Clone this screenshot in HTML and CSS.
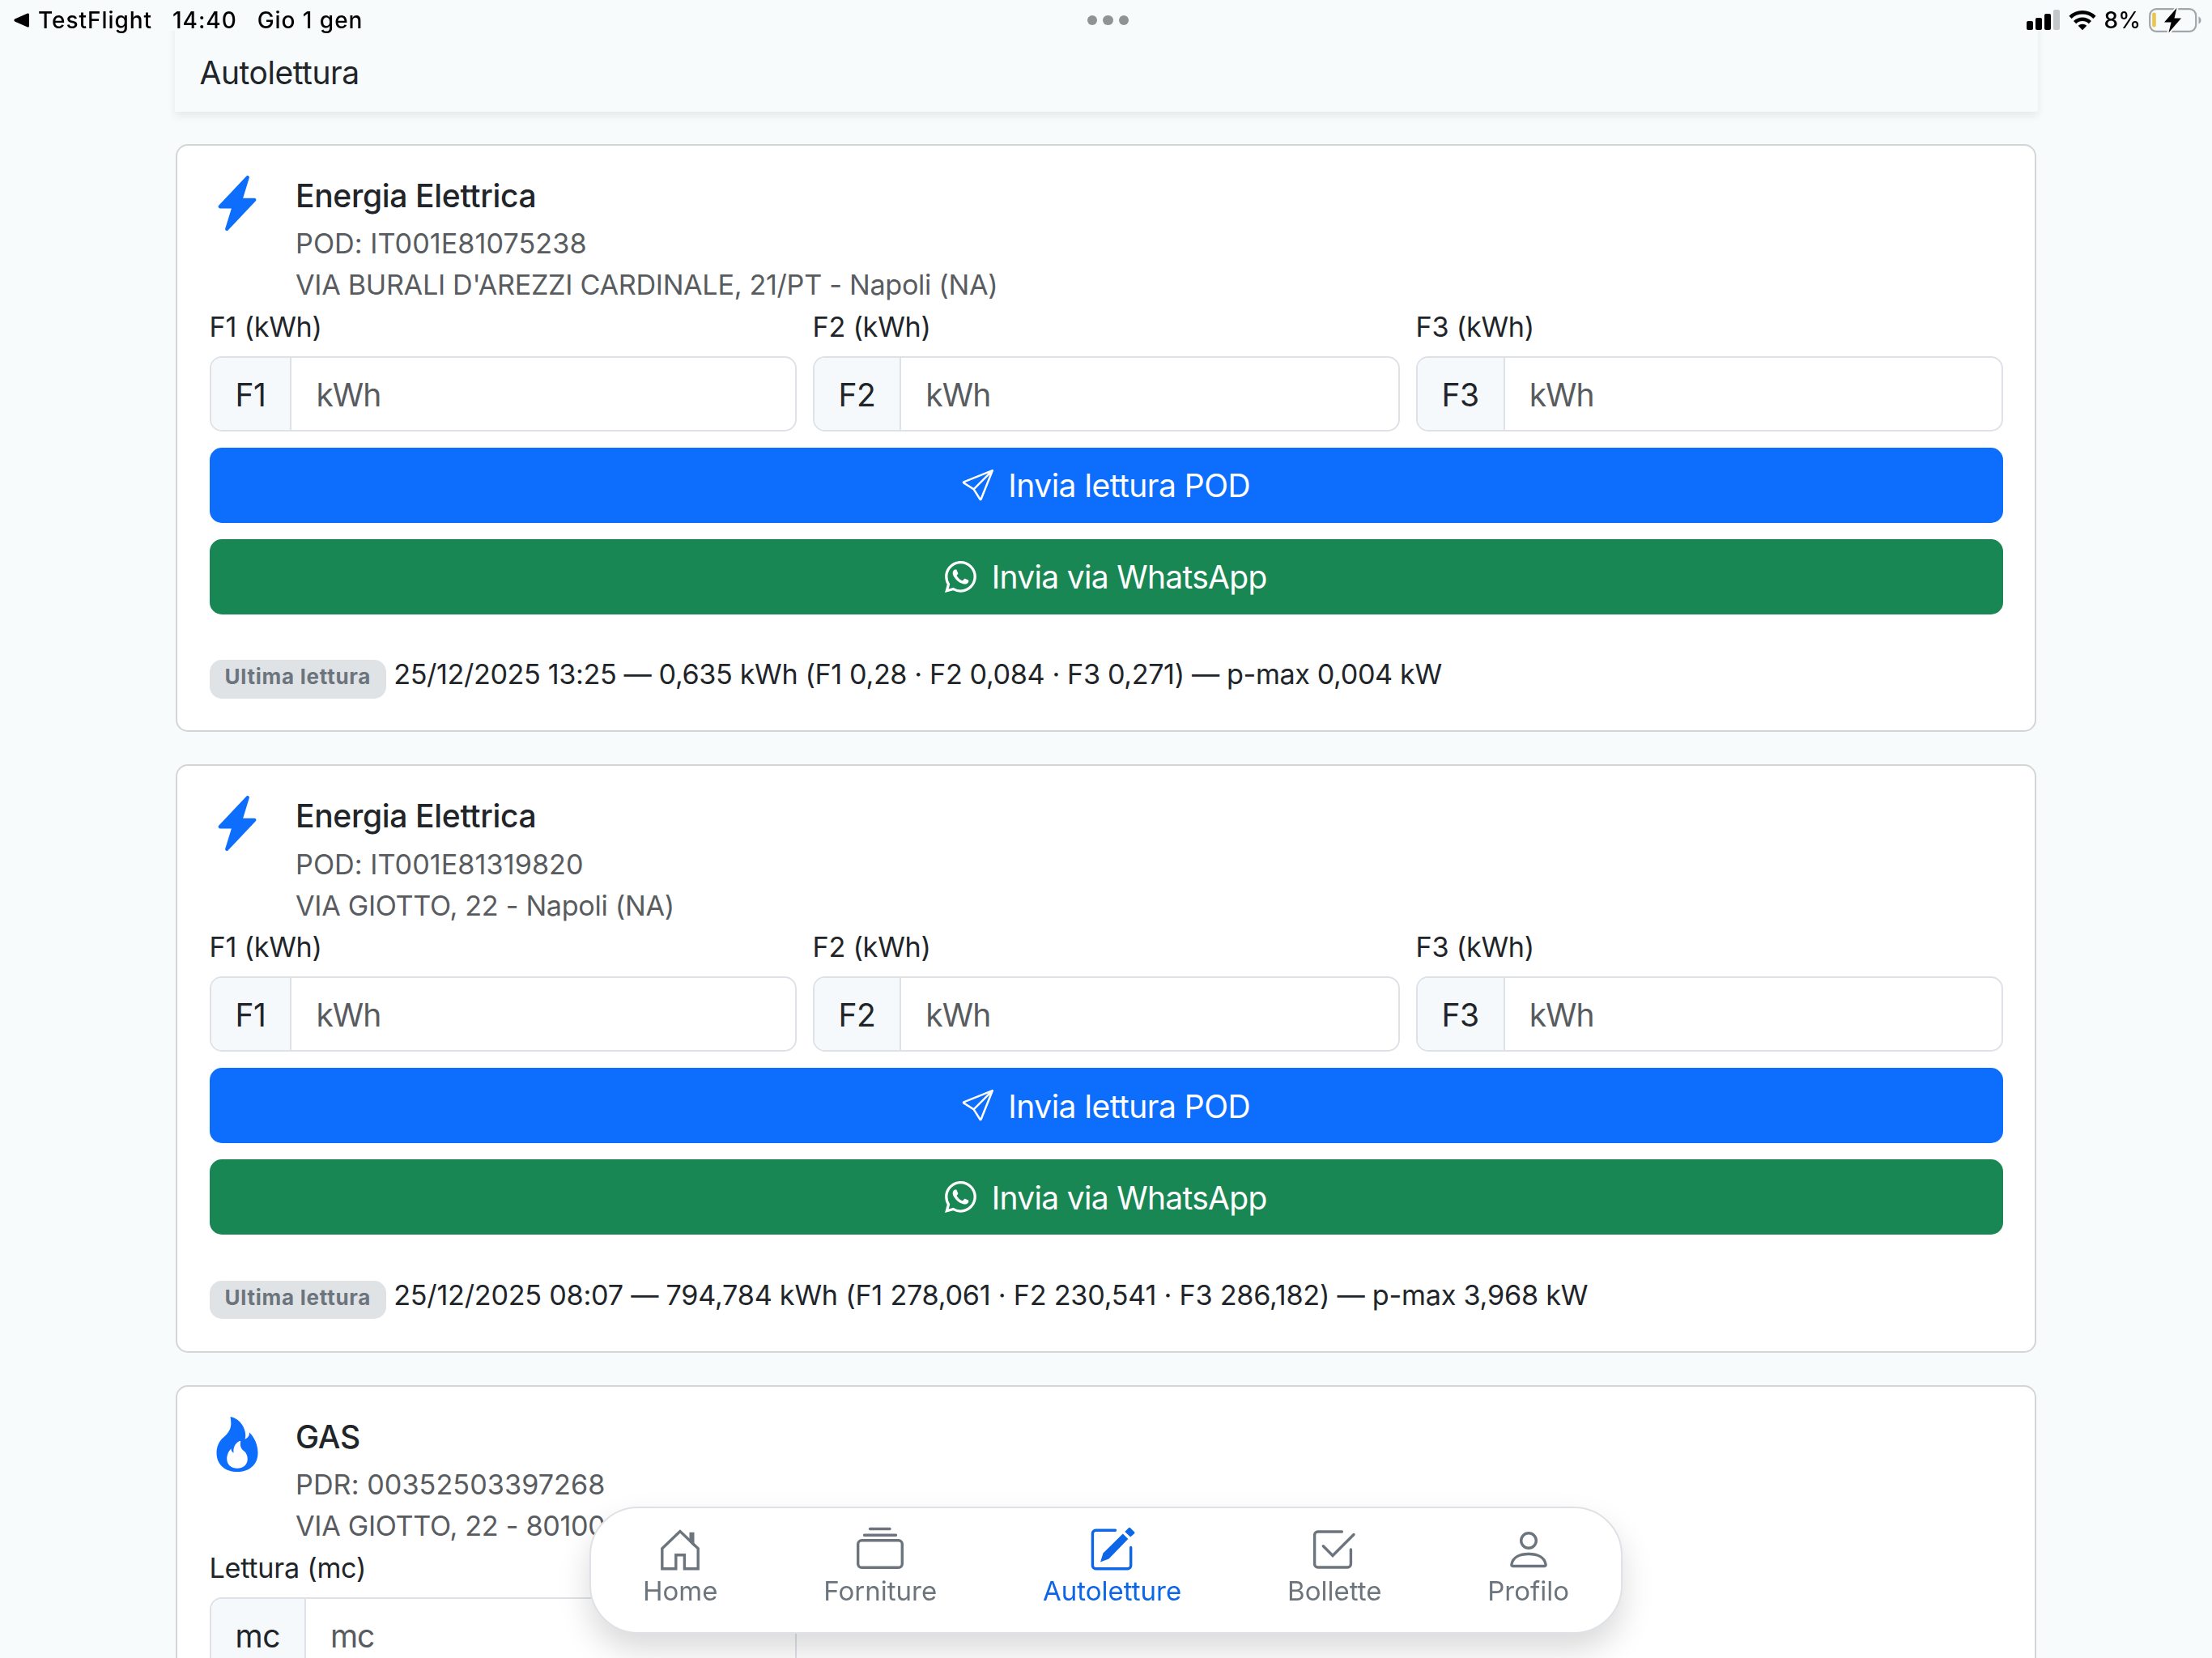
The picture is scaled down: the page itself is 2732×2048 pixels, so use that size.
FILE: index.html
```html
<!DOCTYPE html>
<html lang="it">
<head>
    <meta charset="UTF-8">
    <meta name="viewport" content="width=device-width, initial-scale=1.0">
    <title>Autolettura</title>
    <link rel="stylesheet" href="styles.css">
</head>
<body>
    <!-- Status bar -->
    <div class="status-bar">
        <div class="status-left">
            <svg class="back-arrow" viewBox="0 0 20 18"><path d="M1.2 7.6 17 .6Q19 0 19 2v14q0 2-2 1.4L1.2 10.4Q-.4 9 1.2 7.6z"/></svg>
            <span class="status-app">TestFlight</span>
            <span class="status-time">14:40</span>
            <span class="status-date">Gio 1 gen</span>
        </div>
        <div class="status-dots"><i></i><i></i><i></i></div>
        <div class="status-right">
            <svg class="signal" viewBox="0 0 42 26">
                <rect x="0" y="14" width="8" height="11" rx="2"/>
                <rect x="11" y="10" width="8" height="15" rx="2"/>
                <rect x="22" y="5" width="8" height="20" rx="2"/>
                <rect x="33" y="0" width="8" height="25" rx="2" fill="#c3c7c9"/>
            </svg>
            <svg class="wifi" viewBox="0 0 34 26">
                <path d="M2 9.3a21.5 21.5 0 0 1 30 0" fill="none" stroke="#000" stroke-width="4.6"/>
                <path d="M7.6 15.6a13.4 13.4 0 0 1 18.8 0" fill="none" stroke="#000" stroke-width="4.6"/>
                <path d="M17 25.2l-5.3-5.4a7.6 7.6 0 0 1 10.6 0z"/>
            </svg>
            <span class="status-battery">8%</span>
            <svg class="battery" viewBox="0 0 66 32">
                <rect x="1.2" y="2.2" width="57" height="27.6" rx="8" fill="none" stroke="#a3a6a8" stroke-width="2.2"/>
                <rect x="4.2" y="6.5" width="4.6" height="18" rx="2" fill="#eac54f"/>
                <path d="M61.5 11.5q3 1.5 3 4.5t-3 4.5z" fill="#a3a6a8"/>
                <path d="M34.5.8 19 18.6h8.6l-3.2 13L40 13.600h-8.500z" stroke="#f7fbfc" stroke-width="4"/>
                <path d="M34.5.8 19 18.6h8.6l-3.2 13L40 13.600h-8.500z"/>
            </svg>
        </div>
    </div>

    <header class="page-header">Autolettura</header>

    <main class="container">
        <!-- POD 1 -->
        <section class="card">
            <div class="card-head">
                <svg class="supply-icon" viewBox="0 0 16 16"><path d="M11.251.068a.5.5 0 0 1 .227.58L9.677 6.5H13a.5.5 0 0 1 .364.843l-8 8.5a.5.5 0 0 1-.842-.49L6.323 9.5H3a.5.5 0 0 1-.364-.843l8-8.5a.5.5 0 0 1 .615-.09z"/></svg>
                <div>
                    <h2>Energia Elettrica</h2>
                    <p class="code">POD: IT001E81075238</p>
                    <p>VIA BURALI D'AREZZI CARDINALE, 21/PT - Napoli (NA)</p>
                </div>
            </div>
            <div class="fields">
                <div class="field">
                    <label>F1 (kWh)</label>
                    <div class="input-group"><span class="addon">F1</span><span class="input">kWh</span></div>
                </div>
                <div class="field">
                    <label>F2 (kWh)</label>
                    <div class="input-group"><span class="addon">F2</span><span class="input">kWh</span></div>
                </div>
                <div class="field">
                    <label>F3 (kWh)</label>
                    <div class="input-group"><span class="addon">F3</span><span class="input">kWh</span></div>
                </div>
            </div>
            <div class="btn btn-primary">
                <svg viewBox="0 0 16 16"><path d="M15.854.146a.5.5 0 0 1 .11.54l-5.819 14.547a.75.75 0 0 1-1.329.124l-3.178-4.995L.643 7.184a.75.75 0 0 1 .124-1.33L15.314.037a.5.5 0 0 1 .54.11ZM6.636 10.07l2.761 4.338L14.13 2.576zm6.787-8.201L1.591 6.602l4.339 2.76z"/></svg>
                <span>Invia lettura POD</span>
            </div>
            <div class="btn btn-success">
                <svg viewBox="0 0 16 16"><path d="M13.601 2.326A7.85 7.85 0 0 0 7.994 0C3.627 0 .068 3.558.064 7.926c0 1.399.366 2.76 1.057 3.965L0 16l4.204-1.102a7.9 7.9 0 0 0 3.79.965h.004c4.368 0 7.926-3.558 7.93-7.93A7.9 7.9 0 0 0 13.6 2.326zM7.994 14.521a6.6 6.6 0 0 1-3.356-.92l-.24-.144-2.494.654.666-2.433-.156-.251a6.56 6.56 0 0 1-1.007-3.505c0-3.626 2.957-6.584 6.591-6.584a6.56 6.56 0 0 1 4.66 1.931 6.56 6.56 0 0 1 1.928 4.66c-.004 3.639-2.961 6.592-6.592 6.592m3.615-4.934c-.197-.099-1.17-.578-1.353-.646-.182-.065-.315-.099-.445.099-.133.197-.513.646-.627.775-.114.133-.232.148-.43.05-.197-.1-.836-.308-1.592-.985-.59-.525-.985-1.175-1.103-1.372-.114-.198-.011-.304.088-.403.087-.088.197-.232.296-.346.1-.114.133-.198.198-.33.065-.134.034-.248-.015-.347-.05-.099-.445-1.076-.612-1.47-.16-.389-.323-.335-.445-.34-.114-.007-.247-.007-.38-.007a.73.73 0 0 0-.529.247c-.182.198-.691.677-.691 1.654s.71 1.916.81 2.049c.098.133 1.394 2.132 3.383 2.992.47.205.84.326 1.129.418.475.152.904.129 1.246.08.38-.058 1.171-.48 1.338-.943.164-.464.164-.86.114-.943-.049-.084-.182-.133-.38-.232"/></svg>
                <span>Invia via WhatsApp</span>
            </div>
            <div class="last-reading">
                <span class="badge">Ultima lettura</span>
                <span class="reading">25/12/2025 13:25 — 0,635 kWh (F1 0,28 · F2 0,084 · F3 0,271) — p-max 0,004 kW</span>
            </div>
        </section>

        <!-- POD 2 -->
        <section class="card">
            <div class="card-head">
                <svg class="supply-icon" viewBox="0 0 16 16"><path d="M11.251.068a.5.5 0 0 1 .227.58L9.677 6.5H13a.5.5 0 0 1 .364.843l-8 8.5a.5.5 0 0 1-.842-.49L6.323 9.5H3a.5.5 0 0 1-.364-.843l8-8.5a.5.5 0 0 1 .615-.09z"/></svg>
                <div>
                    <h2>Energia Elettrica</h2>
                    <p class="code">POD: IT001E81319820</p>
                    <p>VIA GIOTTO, 22 - Napoli (NA)</p>
                </div>
            </div>
            <div class="fields">
                <div class="field">
                    <label>F1 (kWh)</label>
                    <div class="input-group"><span class="addon">F1</span><span class="input">kWh</span></div>
                </div>
                <div class="field">
                    <label>F2 (kWh)</label>
                    <div class="input-group"><span class="addon">F2</span><span class="input">kWh</span></div>
                </div>
                <div class="field">
                    <label>F3 (kWh)</label>
                    <div class="input-group"><span class="addon">F3</span><span class="input">kWh</span></div>
                </div>
            </div>
            <div class="btn btn-primary">
                <svg viewBox="0 0 16 16"><path d="M15.854.146a.5.5 0 0 1 .11.54l-5.819 14.547a.75.75 0 0 1-1.329.124l-3.178-4.995L.643 7.184a.75.75 0 0 1 .124-1.33L15.314.037a.5.5 0 0 1 .54.11ZM6.636 10.07l2.761 4.338L14.13 2.576zm6.787-8.201L1.591 6.602l4.339 2.76z"/></svg>
                <span>Invia lettura POD</span>
            </div>
            <div class="btn btn-success">
                <svg viewBox="0 0 16 16"><path d="M13.601 2.326A7.85 7.85 0 0 0 7.994 0C3.627 0 .068 3.558.064 7.926c0 1.399.366 2.76 1.057 3.965L0 16l4.204-1.102a7.9 7.9 0 0 0 3.79.965h.004c4.368 0 7.926-3.558 7.93-7.93A7.9 7.9 0 0 0 13.6 2.326zM7.994 14.521a6.6 6.6 0 0 1-3.356-.92l-.24-.144-2.494.654.666-2.433-.156-.251a6.56 6.56 0 0 1-1.007-3.505c0-3.626 2.957-6.584 6.591-6.584a6.56 6.56 0 0 1 4.66 1.931 6.56 6.56 0 0 1 1.928 4.66c-.004 3.639-2.961 6.592-6.592 6.592m3.615-4.934c-.197-.099-1.17-.578-1.353-.646-.182-.065-.315-.099-.445.099-.133.197-.513.646-.627.775-.114.133-.232.148-.43.05-.197-.1-.836-.308-1.592-.985-.59-.525-.985-1.175-1.103-1.372-.114-.198-.011-.304.088-.403.087-.088.197-.232.296-.346.1-.114.133-.198.198-.33.065-.134.034-.248-.015-.347-.05-.099-.445-1.076-.612-1.47-.16-.389-.323-.335-.445-.34-.114-.007-.247-.007-.38-.007a.73.73 0 0 0-.529.247c-.182.198-.691.677-.691 1.654s.71 1.916.81 2.049c.098.133 1.394 2.132 3.383 2.992.47.205.84.326 1.129.418.475.152.904.129 1.246.08.38-.058 1.171-.48 1.338-.943.164-.464.164-.86.114-.943-.049-.084-.182-.133-.38-.232"/></svg>
                <span>Invia via WhatsApp</span>
            </div>
            <div class="last-reading">
                <span class="badge">Ultima lettura</span>
                <span class="reading reading-long">25/12/2025 08:07 — 794,784 kWh (F1 278,061 · F2 230,541 · F3 286,182) — p-max 3,968 kW</span>
            </div>
        </section>

        <!-- PDR -->
        <section class="card">
            <div class="card-head">
                <svg class="supply-icon" viewBox="0 0 16 16"><path d="M8 16c3.314 0 6-2 6-5.5 0-1.5-.5-4-2.5-6 .25 1.5-1.25 2-1.25 2C11 4 9 .5 6 0c.357 2 .5 4-2 6-1.25 1-2 2.729-2 4.5C2 14 4.686 16 8 16m0-1c-1.657 0-3-1-3-2.75 0-.75.25-2 1.25-3C6.125 10 7 10.5 7 10.5c-.375-1.25.5-3.25 2-3.5-.179 1-.25 2 1 3 .625.5 1 1.364 1 2.25C11 14 9.657 15 8 15"/></svg>
                <div>
                    <h2>GAS</h2>
                    <p class="code">PDR: 00352503397268</p>
                    <p>VIA GIOTTO, 22 - 80100</p>
                </div>
            </div>
            <div class="fields">
                <div class="field">
                    <label>Lettura (mc)</label>
                    <div class="input-group"><span class="addon">mc</span><span class="input">mc</span></div>
                </div>
            </div>
        </section>
    </main>

    <!-- Floating tab bar -->
    <nav class="tab-bar">
        <a class="tab">
            <svg viewBox="0 0 58 58">
                <path d="M29 6.500 6.800 27.700v25h17v-17h10.600v17h16.800v-25z"/>
                <path class="solid" d="M40.500 7.700h6v18l-6-6z"/>
            </svg>
            <span>Home</span>
        </a>
        <a class="tab">
            <svg viewBox="0 0 58 58">
                <path d="M16.500 3.500h24.500M9.500 11.300h39"/>
                <rect x="1.700" y="17.800" width="54.600" height="33.500" rx="4.500"/>
            </svg>
            <span>Forniture</span>
        </a>
        <a class="tab active">
            <svg viewBox="0 0 58 58">
                <path d="M32.500 5.300H8.400a4 4 0 0 0-4 4v39.400a4 4 0 0 0 4 4h39.300a4 4 0 0 0 4-4V26.500"/>
                <path class="solid" d="M41.800 9.500 17.500 33.500 14 44.500 24.500 40.500 48.300 16z"/>
                <path class="solid" d="M44.300 7 49 2.300q1-1 2 0l5 5q1 1 0 2L51.200 13.600z"/>
            </svg>
            <span>Autoletture</span>
        </a>
        <a class="tab">
            <svg viewBox="0 0 58 58">
                <path d="M38.400 7H8.600a4 4 0 0 0-4 4v36a4 4 0 0 0 4 4h36.800a4 4 0 0 0 4-4V29"/>
                <path d="M15.300 24.800 27 36.500 53 10.500"/>
            </svg>
            <span>Bollette</span>
        </a>
        <a class="tab">
            <svg viewBox="0 0 58 58">
                <circle cx="29" cy="18" r="9.300"/>
                <path d="M9.500 49.500h39q2 0 1.500-2.500C48.500 39 40.500 34.500 29 34.500S9.500 39 8 47q-.500 2.500 1.500 2.500z"/>
            </svg>
            <span>Profilo</span>
        </a>
    </nav>
</body>
</html>
```

FILE: styles.css
```css
* {
    box-sizing: border-box;
}
body {
    margin: 0;
    height: 2048px;
    overflow: hidden;
    background: #f7fbfc;
    color: #212529;
    font-family: Inter, "Noto Sans", sans-serif;
    font-size: 39px;
    line-height: 1.5;
}

/* Status bar */
.status-bar {
    position: fixed;
    top: 0;
    left: 0;
    right: 0;
    height: 38px;
    padding: 12px 12px 0 17px;
    display: grid;
    grid-template-columns: 1fr auto 1fr;
    grid-template-rows: 26px;
    align-items: center;
    background: #f7fbfc;
    color: #000;
    font-size: 28px;
    font-weight: 500;
    line-height: 26px;
}
.status-left,
.status-right,
.status-dots {
    display: flex;
    align-items: center;
}
.status-left {
    letter-spacing: 0.95px;
}
.back-arrow {
    width: 20px;
    height: 18px;
    margin-right: 10px;
}
.status-time {
    margin: 0 25px;
}
.status-dots {
    gap: 7px;
}
.status-dots i {
    width: 12.5px;
    height: 12.5px;
    border-radius: 50%;
    background: #8f9394;
}
.status-right {
    justify-content: flex-end;
}
.signal {
    width: 42px;
    height: 26px;
}
.wifi {
    width: 34px;
    height: 26px;
    margin: 0 10px;
}
.battery {
    width: 66px;
    height: 32px;
    margin-left: 10px;
}

.page-header {
    width: 2301px;
    height: 138px;
    margin: 0 auto;
    padding: 61px 31px 0;
    letter-spacing: -0.45px;
    box-shadow: 0 5px 10px rgba(0, 0, 0, 0.075);
}
.container {
    width: 2298px;
    margin: 39.5px auto 0;
}

/* Supply cards */
.card {
    height: 726.5px;
    margin-bottom: 40px;
    padding: 37px 39.5px;
    background: #fff;
    border: 2px solid #d3d5d7;
    border-radius: 15px;
}
.card-head {
    display: flex;
    gap: 38.5px;
}
.supply-icon {
    width: 68px;
    height: 68px;
    fill: #0d6efd;
}
h2 {
    margin: -4px 0 4px;
    font-size: 39px;
    font-weight: 500;
    letter-spacing: -0.33px;
}
p {
    margin: 0;
    font-size: 34.2px;
    letter-spacing: -0.31px;
    color: #595c5f;
}
.code {
    letter-spacing: 0.05px;
}
.fields {
    display: grid;
    grid-template-columns: repeat(3, 1fr);
    gap: 20px;
}
label {
    display: block;
    margin-bottom: 11px;
    font-size: 34.2px;
    letter-spacing: -0.25px;
}
.input-group {
    display: flex;
    height: 93px;
    border: 2px solid #dee2e6;
    border-radius: 15px;
    overflow: hidden;
    line-height: 91px;
}
.addon {
    padding: 0 30px;
    background: #f6f9fb;
    border-right: 2px solid #dee2e6;
    letter-spacing: -0.5px;
}
.input {
    padding-left: 30px;
    letter-spacing: -1px;
    color: #595c5f;
}
.btn {
    display: flex;
    justify-content: center;
    align-items: center;
    gap: 18.5px;
    height: 93px;
    margin-top: 20px;
    border-radius: 15px;
    color: #fff;
}
.btn svg {
    width: 39px;
    height: 39px;
    fill: #fff;
}
.btn span {
    margin-top: 2px;
}
.btn-primary {
    background: #0d6efd;
    letter-spacing: -0.5px;
}
.btn-success {
    background: #198754;
    letter-spacing: -0.7px;
}
.last-reading {
    display: flex;
    align-items: flex-start;
    gap: 9px;
    margin-top: 48.5px;
    font-size: 34.2px;
}
.badge {
    height: 47.5px;
    margin-top: 8px;
    padding: 0 19px;
    background: #dfe3e6;
    border-radius: 15px;
    color: #6c757d;
    font-size: 26px;
    font-weight: 700;
    line-height: 42px;
    letter-spacing: 0.75px;
}
.reading {
    letter-spacing: -0.38px;
}
.reading-long {
    letter-spacing: -0.24px;
}

/* Tab bar */
.tab-bar {
    position: fixed;
    left: 728px;
    top: 1861px;
    width: 1276px;
    height: 157px;
    padding: 22px 64px 0;
    display: flex;
    justify-content: space-between;
    background: #fff;
    border: 2px solid #dee2e6;
    border-radius: 60px;
    box-shadow: 0 20px 39px rgba(0, 0, 0, 0.15);
    color: #6c757d;
    font-size: 33px;
    line-height: 48px;
}
.tab {
    display: flex;
    flex-direction: column;
    align-items: center;
    gap: 0;
}
.tab svg {
    width: 58px;
    height: 58px;
    fill: none;
    stroke: currentColor;
    stroke-width: 3.4;
    stroke-linecap: round;
}
.tab .solid {
    fill: currentColor;
    stroke: none;
}
.tab span {
    margin-top: -2px;
}
.tab.active {
    color: #0d66e8;
}
```
